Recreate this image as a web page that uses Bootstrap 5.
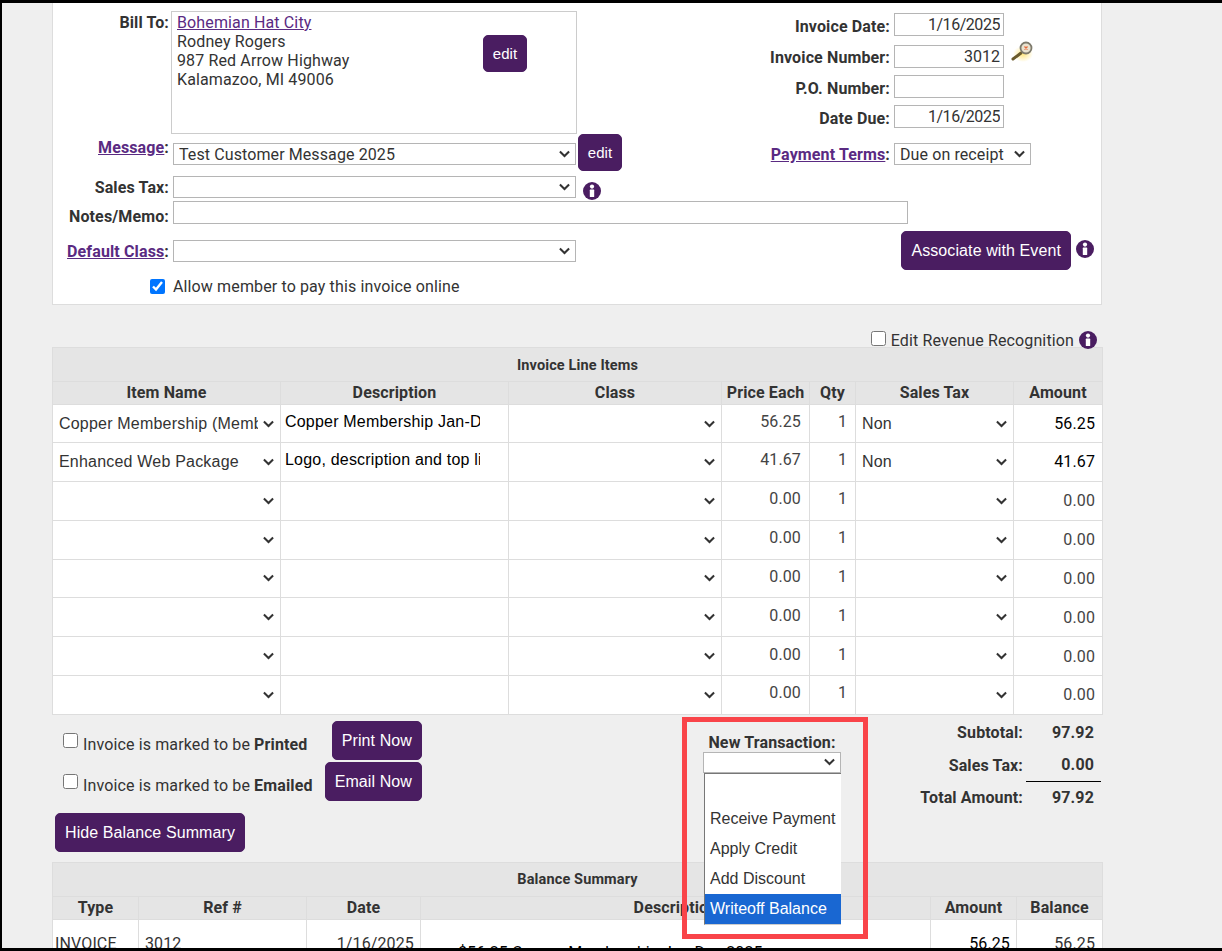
<!DOCTYPE html>
<html lang="en">
<head>
<meta charset="utf-8">
<title>Invoice</title>
<link href="https://cdn.jsdelivr.net/npm/bootstrap@5.3.0/dist/css/bootstrap.min.css" rel="stylesheet">
<style>
html,body{margin:0;height:951px;overflow:hidden;background:#efefef}
body{font-family:Roboto,"Liberation Sans",sans-serif;font-size:16px;line-height:19px;color:#333;letter-spacing:.13px}
.sheet{width:1222px;height:951px;overflow:hidden;border-top:3px solid #000;border-bottom:3px solid #000;border-left:2px solid #000;padding-left:50px;background:#efefef}
.inner{width:1050px}
.panel{background:#fff;border:1px solid #ddd;border-top:0;height:302px;padding-top:8px}
.lbl{width:116px;flex:none;text-align:right;font-weight:700;color:#333}
.lbl a,.lbl2 a{color:#5a2a82}
.lbl2{width:130px;flex:none;text-align:right;font-weight:700;margin-right:4px}
.btn-pur{--bs-btn-bg:#4a1d61;--bs-btn-border-color:#4a1d61;--bs-btn-color:#fff;--bs-btn-hover-bg:#4a1d61;--bs-btn-hover-color:#fff;--bs-btn-hover-border-color:#4a1d61;font-family:"Liberation Sans",Arial,sans-serif;font-size:16px;line-height:19px;padding:9px 9px;border-radius:5px;height:39px;white-space:nowrap;letter-spacing:.1px}
.btn-edit{font-size:15px;width:44px;height:37px;padding:8px 0}
.billbox{width:406px;height:123px;border:1px solid #ccc;margin-left:2px;padding:1px 5px;flex:none}
.billbox a{color:#5a2a82}
.btn-inbox{margin:22px 44px 0 0}
.sel,.tsel{background-image:url("data:image/svg+xml,%3csvg xmlns='http://www.w3.org/2000/svg' viewBox='0 0 12 8'%3e%3cpath fill='none' stroke='%23333' stroke-width='2.2' d='M1 1.2l5 5 5-5'/%3e%3c/svg%3e");background-size:11px 8px}
.sel{width:403px;height:22px;min-height:22px;border:1px solid #b5b5b5;border-radius:0;padding:1px 20px 0 5px;font-size:16px;line-height:20px;color:#333;font-family:Roboto,sans-serif;background-position:right 5px center;margin-left:4px;flex:none;letter-spacing:.1px}
.txt{height:23px;min-height:23px;border:1px solid #b5b5b5;border-radius:0;padding:0 3px;font-size:16px;line-height:20px;color:#333;width:110px;text-align:right;font-family:Roboto,sans-serif}
.dt{letter-spacing:-.45px}
.frow{display:flex;align-items:flex-start}
.col-l{width:569px;flex:none}
.col-r{margin-left:138px;margin-top:2px;width:340px}
.ic{display:block;flex:none}
.tbl{table-layout:fixed;width:1050px;margin:0;border-color:#ddd;--bs-table-border-color:#ddd;--bs-table-color:#333;border-collapse:collapse}
.tbl>:not(caption)>*>*{padding:0;border:1px solid #ddd;vertical-align:middle}
.tbl th{background:#e5e5e5;--bs-table-bg:#e5e5e5;text-align:center;font-weight:700;color:#333;height:23px;line-height:20px}
.tbl th.cap{height:34px;font-size:14.5px;font-weight:700}
.tbl th.cap-t{padding-top:2px}
.tbl tbody td{height:38.85px;background:#fff}
.tbl tbody tr:first-child td{height:38px}
.tsel{border:0;border-radius:0;padding:1px 22px 0 6px;height:36px;min-height:36px;font-size:16px;color:#333;font-family:"Liberation Sans",Arial,sans-serif;width:100%;background-position:right 6px center;background-color:#fff;white-space:nowrap;letter-spacing:.2px}
.tinp{display:block;border:0;outline:0;padding:0;margin:-4px 0 0 4px;width:195px;height:22px;font-size:16px;color:#000;font-family:"Liberation Sans",Arial,sans-serif;background:transparent;letter-spacing:.2px}
.num{text-align:right;color:#444}
.num span{display:block;margin-top:-4px;padding-right:8px}
.amt{text-align:right;padding-right:7px!important;color:#444}
.amt-dark{color:#000}
.low{display:flex;height:147px;position:relative}
.low-l{width:370px;flex:none;padding:6px 0 0 11px}
.prow{display:flex;justify-content:space-between;margin-bottom:2px;height:39px}
.prow input,.revrow input{width:15px;height:15px;margin:0 5px 0 0;flex:none}
.chk-t{display:flex;align-items:flex-start;padding-top:13px}
.prow .chk-t input{margin-top:-1px}
.chk-t span{margin-top:1px}
.revrow input{margin-top:-4px}
.low-m{position:relative;margin-left:281px;width:138px;flex:none;padding-top:18px;text-align:center}
.low-m .bold{font-weight:700;display:block;white-space:nowrap}
.newsel{width:138px;height:21px;min-height:21px;margin:0;padding:0;display:block}
.droplist{position:absolute;left:1px;top:58px;width:137px;height:152px;background:#fff;border-left:1px solid #777;border-top:1px solid #777;border-bottom:1px solid #ccc;text-align:left;z-index:3;font-family:"Liberation Sans",Arial,sans-serif;letter-spacing:0}
.droplist div{height:30px;line-height:29px;padding-left:5px;white-space:nowrap}
.droplist .hl{background:#1967d2;color:#fff}
.redbox{position:absolute;left:-21px;top:2px;width:186px;height:222px;border:5px solid #f94449;z-index:4;pointer-events:none}
.low-r{margin-left:auto;margin-right:2px;width:260px;display:grid;grid-template-columns:185px 75px;grid-template-rows:32px 33px 32px;padding-top:2px;font-weight:700;height:fit-content}
.low-r>div{display:flex;align-items:center;justify-content:flex-end;padding-right:3px}
.low-r .v{padding-right:7px}
.low-r .line{border-bottom:1px solid #000}
.revrow{display:flex;justify-content:flex-end;align-items:center;height:20px;margin-top:25px;margin-bottom:-3px;padding-right:5px}
.hidebtn{margin:-49px 0 0 3px;display:block;position:relative;letter-spacing:.1px}
.bal-top{vertical-align:top!important;padding-top:14px!important}
</style>
</head>
<body>
<div class="sheet"><div class="inner">
<div class="panel">
 <div class="d-flex">
  <div class="col-l">
   <div class="frow">
    <div class="lbl" style="margin-top:2px">Bill To:</div>
    <div class="billbox d-flex justify-content-between">
     <div><a href="#">Bohemian Hat City</a><br>Rodney Rogers<br>987 Red Arrow Highway<br>Kalamazoo, MI 49006</div>
     <button type="button" class="btn btn-pur btn-edit btn-inbox">edit</button>
    </div>
   </div>
   <div class="frow">
    <div class="lbl" style="margin-top:4px"><a href="#">Message</a>:</div>
    <select class="form-select sel" style="margin-top:9px"><option>Test Customer Message 2025</option></select>
    <button type="button" class="btn btn-pur btn-edit" style="margin-left:2px">edit</button>
   </div>
  </div>
  <div class="col-r">
   <div class="frow" style="height:32px"><div class="lbl2 mt-1">Invoice Date:</div><input class="form-control txt dt" value="1/16/2025"></div>
   <div class="frow" style="height:30px">
    <div class="lbl2" style="margin-top:3px">Invoice Number:</div><input class="form-control txt" value="3012">
    <svg class="ic" style="margin:-4px 0 0 7px" width="23" height="22" viewBox="0 0 23 22"><defs><radialGradient id="g"><stop offset="0" stop-color="#ffe680"/><stop offset="1" stop-color="#ffe680" stop-opacity="0"/></radialGradient></defs><ellipse cx="12" cy="13" rx="10" ry="8" fill="url(#g)"/><line x1="2" y1="18" x2="10" y2="12" stroke="#6b5a2a" stroke-width="3" stroke-linecap="round"/><circle cx="15" cy="7" r="5.5" fill="#e9e2cf" stroke="#7d7a6c" stroke-width="1.8"/><path d="M13.5 5.5l3 3M16.5 5.5l-3 3" stroke="#e8683a" stroke-width="1.3"/></svg>
   </div>
   <div class="frow" style="height:30px"><div class="lbl2 mt-1">P.O. Number:</div><input class="form-control txt"></div>
   <div class="frow" style="height:38px"><div class="lbl2 mt-1">Date Due:</div><input class="form-control txt dt" value="1/16/2025"></div>
   <div class="frow"><div class="lbl2" style="margin-top:2px"><a href="#">Payment Terms</a>:</div><select class="form-select sel" style="width:137px;margin-left:0"><option>Due on receipt</option></select></div>
  </div>
 </div>
 <div class="frow" style="margin-top:5px">
  <div class="lbl" style="margin-top:2px">Sales Tax:</div>
  <select class="form-select sel"><option></option></select>
  <svg class="ic" style="margin:6px 0 0 7px" width="18" height="18" viewBox="0 0 18 18"><circle cx="9" cy="9" r="9" fill="#4a1d61"/><circle cx="9" cy="4.6" r="2.1" fill="#fff"/><rect x="6.8" y="7.6" width="4.4" height="7.4" rx=".6" fill="#fff"/></svg>
 </div>
 <div class="frow" style="margin-top:1px">
  <div class="lbl" style="margin-top:6px">Notes/Memo:</div>
  <input class="form-control txt" style="width:735px;margin-left:4px;text-align:left">
 </div>
 <div class="frow" style="margin-top:5px;height:39px;padding-right:7px">
  <div class="lbl" style="margin-top:11px"><a href="#">Default Class</a>:</div>
  <select class="form-select sel" style="margin-top:9px"><option></option></select>
  <button type="button" class="btn btn-pur ms-auto">Associate with Event</button>
  <svg class="ic" style="margin:9px 0 0 5px" width="18" height="18" viewBox="0 0 18 18"><circle cx="9" cy="9" r="9" fill="#4a1d61"/><circle cx="9" cy="4.6" r="2.1" fill="#fff"/><rect x="6.8" y="7.6" width="4.4" height="7.4" rx=".6" fill="#fff"/></svg>
 </div>
 <div class="d-flex align-items-center" style="margin:7px 0 0 97px">
  <input type="checkbox" checked style="width:15px;height:15px;margin:0 8px 0 0;accent-color:#0075ff">
  <span>Allow member to pay this invoice online</span>
 </div>
</div>

<div class="revrow">
 <input type="checkbox"><span>Edit Revenue Recognition</span>
 <svg class="ic" style="margin-left:5px" width="18" height="18" viewBox="0 0 18 18"><circle cx="9" cy="9" r="9" fill="#4a1d61"/><circle cx="9" cy="4.6" r="2.1" fill="#fff"/><rect x="6.8" y="7.6" width="4.4" height="7.4" rx=".6" fill="#fff"/></svg>
</div>

<table class="table tbl" id="items">
 <colgroup><col style="width:228px"><col style="width:228px"><col style="width:213px"><col style="width:88px"><col style="width:46px"><col style="width:158px"><col style="width:89px"></colgroup>
 <thead>
  <tr><th class="cap cap-t" colspan="7">Invoice Line Items</th></tr>
  <tr><th>Item Name</th><th>Description</th><th>Class</th><th>Price Each</th><th>Qty</th><th>Sales Tax</th><th>Amount</th></tr>
 </thead>
 <tbody>
  <tr><td><select class="form-select tsel"><option>Copper Membership (Member)</option></select></td><td><input class="tinp" value="Copper Membership Jan-Dec 2025"></td><td><select class="form-select tsel"><option></option></select></td><td class="num"><span>56.25</span></td><td class="num"><span>1</span></td><td><select class="form-select tsel"><option>Non</option></select></td><td class="amt amt-dark">56.25</td></tr>
  <tr><td><select class="form-select tsel"><option>Enhanced Web Package</option></select></td><td><input class="tinp" value="Logo, description and top listing"></td><td><select class="form-select tsel"><option></option></select></td><td class="num"><span>41.67</span></td><td class="num"><span>1</span></td><td><select class="form-select tsel"><option>Non</option></select></td><td class="amt amt-dark">41.67</td></tr>
  <tr><td><select class="form-select tsel"><option></option></select></td><td></td><td><select class="form-select tsel"><option></option></select></td><td class="num"><span>0.00</span></td><td class="num"><span>1</span></td><td><select class="form-select tsel"><option></option></select></td><td class="amt">0.00</td></tr>
  <tr><td><select class="form-select tsel"><option></option></select></td><td></td><td><select class="form-select tsel"><option></option></select></td><td class="num"><span>0.00</span></td><td class="num"><span>1</span></td><td><select class="form-select tsel"><option></option></select></td><td class="amt">0.00</td></tr>
  <tr><td><select class="form-select tsel"><option></option></select></td><td></td><td><select class="form-select tsel"><option></option></select></td><td class="num"><span>0.00</span></td><td class="num"><span>1</span></td><td><select class="form-select tsel"><option></option></select></td><td class="amt">0.00</td></tr>
  <tr><td><select class="form-select tsel"><option></option></select></td><td></td><td><select class="form-select tsel"><option></option></select></td><td class="num"><span>0.00</span></td><td class="num"><span>1</span></td><td><select class="form-select tsel"><option></option></select></td><td class="amt">0.00</td></tr>
  <tr><td><select class="form-select tsel"><option></option></select></td><td></td><td><select class="form-select tsel"><option></option></select></td><td class="num"><span>0.00</span></td><td class="num"><span>1</span></td><td><select class="form-select tsel"><option></option></select></td><td class="amt">0.00</td></tr>
  <tr><td><select class="form-select tsel"><option></option></select></td><td></td><td><select class="form-select tsel"><option></option></select></td><td class="num"><span>0.00</span></td><td class="num"><span>1</span></td><td><select class="form-select tsel"><option></option></select></td><td class="amt">0.00</td></tr>
 </tbody>
</table>

<div class="low">
 <div class="low-l">
  <div class="prow"><label class="chk-t"><input type="checkbox"><span>Invoice is marked to be <b>Printed</b></span></label><button type="button" class="btn btn-pur">Print Now</button></div>
  <div class="prow"><label class="chk-t"><input type="checkbox"><span>Invoice is marked to be <b>Emailed</b></span></label><button type="button" class="btn btn-pur">Email Now</button></div>
 </div>
 <div class="low-m">
  <span class="bold">New Transaction:</span>
  <select class="form-select sel newsel"><option></option></select>
  <div class="droplist"><div></div><div>Receive Payment</div><div>Apply Credit</div><div>Add Discount</div><div class="hl">Writeoff Balance</div></div>
  <div class="redbox"></div>
 </div>
 <div class="low-r">
  <div>Subtotal:</div><div class="v">97.92</div>
  <div>Sales Tax:</div><div class="v line">0.00</div>
  <div>Total Amount:</div><div class="v">97.92</div>
 </div>
</div>
<button type="button" class="btn btn-pur hidebtn">Hide Balance Summary</button>

<table class="table tbl" style="margin-top:10px">
 <colgroup><col style="width:86px"><col style="width:168px"><col style="width:114px"><col style="width:510px"><col style="width:86px"><col style="width:86px"></colgroup>
 <thead>
  <tr><th class="cap cap-t" colspan="6">Balance Summary</th></tr>
  <tr><th>Type</th><th>Ref #</th><th>Date</th><th>Description</th><th>Amount</th><th>Balance</th></tr>
 </thead>
 <tbody>
  <tr><td class="bal-top" style="height:60px;padding-left:2px">INVOICE</td><td class="bal-top" style="padding-left:6px">3012</td><td class="bal-top text-end" style="padding-right:6px">1/16/2025</td><td style="vertical-align:top;padding:23px 0 0 37px;color:#000">$56.25 Copper Membership Jan-Dec 2025</td><td class="bal-top text-end" style="padding-right:6px;color:#000">56.25</td><td class="bal-top text-end" style="padding-right:7px">56.25</td></tr>
 </tbody>
</table>
</div></div>
<script src="https://cdn.jsdelivr.net/npm/bootstrap@5.3.0/dist/js/bootstrap.bundle.min.js"></script>
</body>
</html>
